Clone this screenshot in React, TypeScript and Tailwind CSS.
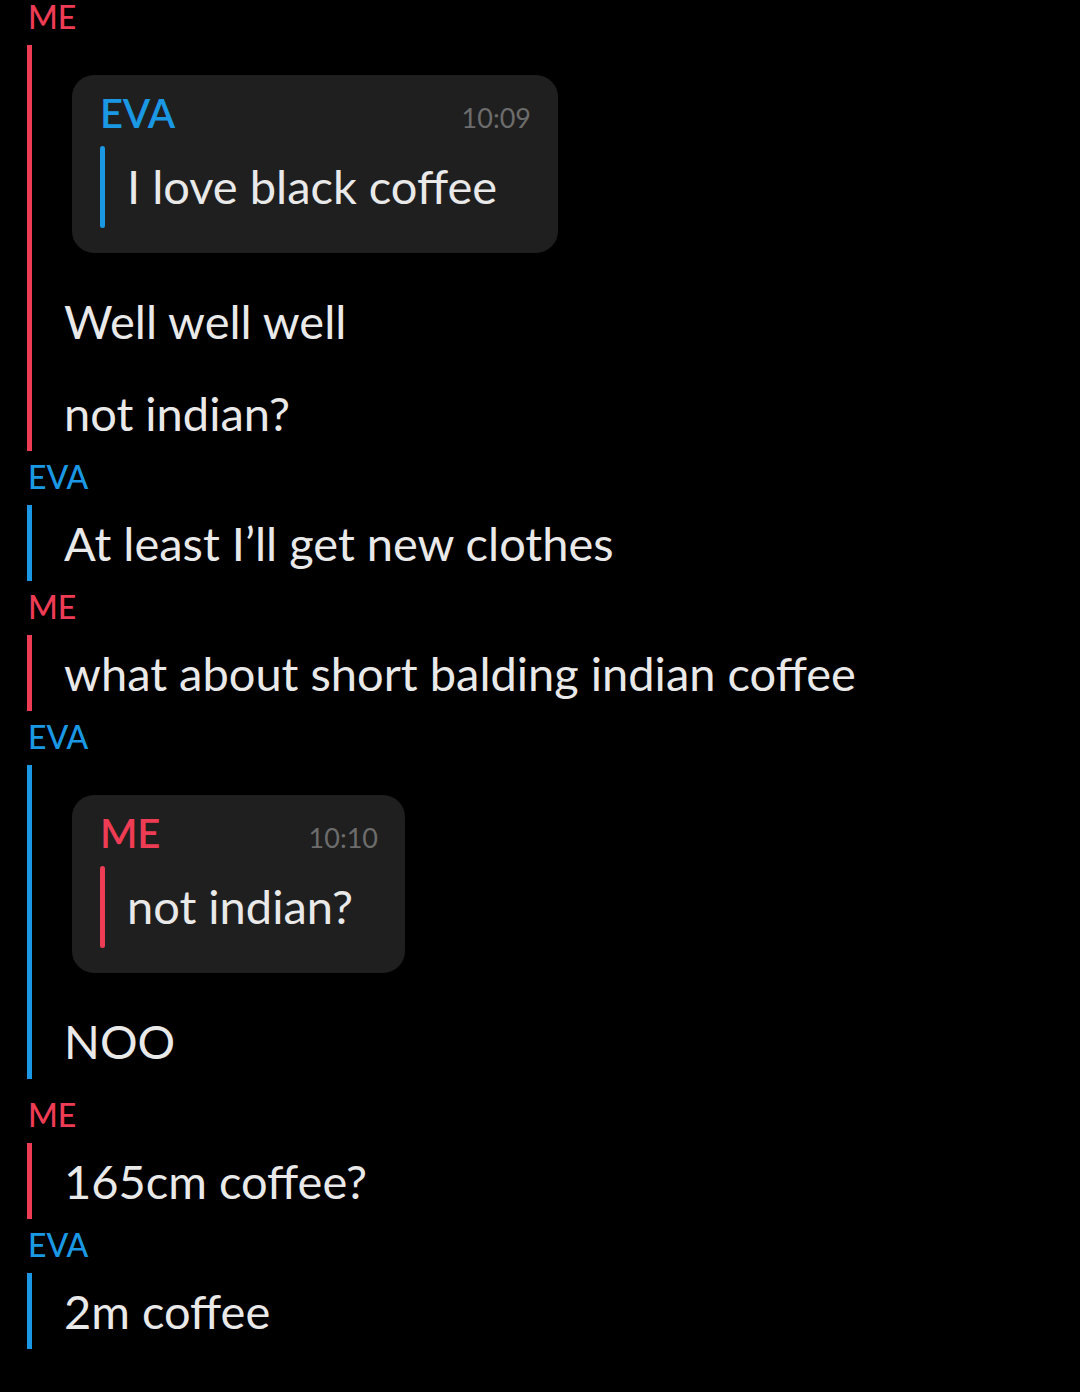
import React from "react";

type Sender = "ME" | "EVA";

const barColor: Record<Sender, string> = {
  ME: "bg-[#ef3c55]",
  EVA: "bg-[#1b98e3]",
};
const nameColor: Record<Sender, string> = {
  ME: "text-[#ef3c55]",
  EVA: "text-[#1b98e3]",
};

type Item =
  | { kind: "text"; text: string }
  | { kind: "reply"; from: Sender; time: string; text: string; width: string };

type Group = { from: Sender; items: Item[]; extra?: string };

const groups: Group[] = [
  {
    from: "ME",
    items: [
      { kind: "reply", from: "EVA", time: "10:09", text: "I love black coffee", width: "w-[486px]" },
      { kind: "text", text: "Well well well" },
      { kind: "text", text: "not indian?" },
    ],
  },
  { from: "EVA", items: [{ kind: "text", text: "At least I\u2019ll get new clothes" }] },
  { from: "ME", items: [{ kind: "text", text: "what about short balding indian coffee" }] },
  {
    from: "EVA",
    extra: "pb-[10px]",
    items: [
      { kind: "reply", from: "ME", time: "10:10", text: "not indian?", width: "w-[333px]" },
      { kind: "text", text: "NOO" },
    ],
  },
  { from: "ME", items: [{ kind: "text", text: "165cm coffee?" }] },
  { from: "EVA", items: [{ kind: "text", text: "2m coffee" }] },
];

function ReplyCard({ item }: { item: Extract<Item, { kind: "reply" }> }) {
  return (
    <div className="py-[30px] pl-[8px]">
      <div className={`${item.width} rounded-[22px] bg-[#1f1f1f] pl-[28px] pr-[27px] pt-[19px] pb-[25px]`}>
        <div className="flex items-baseline justify-between">
          <span className={`text-[40px] leading-[38px] font-semibold tracking-[-0.3px] ${nameColor[item.from]}`}>
            {item.from}
          </span>
          <span className="text-[27px] leading-[27px] text-[#6c6c6c]">{item.time}</span>
        </div>
        <div className="mt-[14px] flex h-[82px] items-stretch">
          <div className={`w-[5px] rounded-full ${barColor[item.from]}`} />
          <div className="pl-[22px] text-[47px] leading-[80px] text-[#e9e9e9] whitespace-nowrap">{item.text}</div>
        </div>
      </div>
    </div>
  );
}

function MessageGroup({ group }: { group: Group }) {
  return (
    <div className="mb-[9px]">
      <div className={`pl-[28px] text-[32px] leading-[34px] font-medium ${nameColor[group.from]}`}>{group.from}</div>
      <div className={`mt-[11px] flex items-stretch ${group.extra ?? ""}`}>
        <div className={`ml-[27px] w-[5px] shrink-0 ${barColor[group.from]}`} />
        <div className="flex flex-col gap-[16px] pl-[32px]">
          {group.items.map((item, i) =>
            item.kind === "reply" ? (
              <div key={i} className="-mb-[16px]">
                <ReplyCard item={item} />
              </div>
            ) : (
              <div key={i} className="text-[47px] leading-[76px] text-[#e9e9e9] whitespace-nowrap">
                {item.text}
              </div>
            )
          )}
        </div>
      </div>
    </div>
  );
}

export default function App() {
  return (
    <div
      className="min-h-[1392px] w-[1080px] overflow-hidden bg-black"
      style={{ fontFamily: "Lato, 'Noto Sans', sans-serif" }}
    >
      {groups.map((g, i) => (
        <MessageGroup key={i} group={g} />
      ))}
    </div>
  );
}
